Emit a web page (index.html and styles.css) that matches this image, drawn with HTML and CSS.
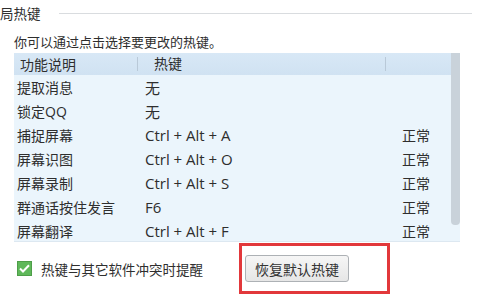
FILE: index.html
```html
<!DOCTYPE html>
<html lang="zh-CN">
<head>
<meta charset="utf-8">
<link rel="stylesheet" href="styles.css">
</head>
<body>
<div class="page">
  <div class="title-row">
    <span class="title">局热键</span>
    <span class="rule"></span>
  </div>
  <div class="hint">你可以通过点击选择要更改的热键。</div>
  <div class="list">
    <div class="table">
      <div class="row head">
        <div class="c1">功能说明</div>
        <div class="c2">热键</div>
        <div class="c3"></div>
      </div>
      <div class="row"><div class="c1">提取消息</div><div class="c2">无</div><div class="c3"></div></div>
      <div class="row"><div class="c1">锁定QQ</div><div class="c2">无</div><div class="c3"></div></div>
      <div class="row"><div class="c1">捕捉屏幕</div><div class="c2">Ctrl + Alt + A</div><div class="c3">正常</div></div>
      <div class="row"><div class="c1">屏幕识图</div><div class="c2">Ctrl + Alt + O</div><div class="c3">正常</div></div>
      <div class="row"><div class="c1">屏幕录制</div><div class="c2">Ctrl + Alt + S</div><div class="c3">正常</div></div>
      <div class="row"><div class="c1">群通话按住发言</div><div class="c2">F6</div><div class="c3">正常</div></div>
      <div class="row"><div class="c1">屏幕翻译</div><div class="c2">Ctrl + Alt + F</div><div class="c3">正常</div></div>
    </div>
    <div class="scrollbar"><div class="thumb"></div></div>
  </div>
  <div class="footer">
    <label class="check">
      <span class="box"><svg width="11" height="9" viewBox="0 0 11 9"><path d="M1 4.5 L4 7.5 L10 1.2" fill="none" stroke="#fff" stroke-width="2"/></svg></span>
      <span>热键与其它软件冲突时提醒</span>
    </label>
    <button class="btn">恢复默认热键</button>
  </div>
  <div class="highlight"></div>
</div>
</body>
</html>
```
FILE: styles.css
```css
* { box-sizing: border-box; }
html, body { margin: 0; padding: 0; background: #fff; }
body {
  width: 480px; height: 300px; overflow: hidden;
  font-family: "Open Sans", "Noto Sans CJK SC", sans-serif;
  font-size: 13px; color: #2e2e2e;
}
.page { position: relative; height: 300px; }
.title-row { display: flex; align-items: center; height: 28px; font-size: 13.5px; }
.title { line-height: 20px; }
.rule { flex: 1; height: 1px; background: #d9dcdf; margin: 0 8px 2px 18px; }
.hint { margin: 4px 0 0 14px; line-height: 20px; height: 21px; }
.list {
  display: flex; margin-left: 14px; width: 446px; height: 189px;
  background: #ebf5fc; border-bottom: 1px solid #dde8f1;
  font-size: 14px;
}
.table { flex: 1; }
.row { display: grid; grid-template-columns: 123px 248px 65px; height: 24px; align-items: center; }
.row.head { height: 22px; background: linear-gradient(#d8e8f6, #d0e2f2); }
.row .c1 { padding-left: 3px; }
.row .c2 { padding-left: 8px; font-size: 15px; }
.row .c3 { padding-left: 17px; }
.row.head .c1 { padding-left: 6px; }
.row.head .c2 { padding-left: 16px; border-left: 1px solid #b9c9d8; height: 14px; line-height: 14px; font-size: 14px; }
.row.head .c3 { border-left: 1px solid #b9c9d8; height: 14px; }
.scrollbar { width: 9px; }
.thumb { height: 172px; background: #c9d2da; border-radius: 0 0 4px 4px; }
.footer { display: flex; align-items: center; padding-top: 13px; height: 40px; }
.check { display: flex; align-items: center; margin-left: 17px; width: 228px; font-size: 13.5px; }
.box {
  width: 15px; height: 15px; background: #5fb85a; border: 1px solid #4e9e49;
  display: flex; align-items: center; justify-content: center; margin-right: 9px;
}
.btn {
  margin: 0; width: 104px; height: 27px; padding: 0;
  font: inherit; font-size: 14px; color: #333;
  background: linear-gradient(#f6f6f6, #e6e6e6);
  border: 1px solid #adb1b5; border-radius: 3px;
}
.highlight {
  position: absolute; left: 239px; top: 243px; width: 151px; height: 51px;
  border: 3px solid #e2383b;
}
```
